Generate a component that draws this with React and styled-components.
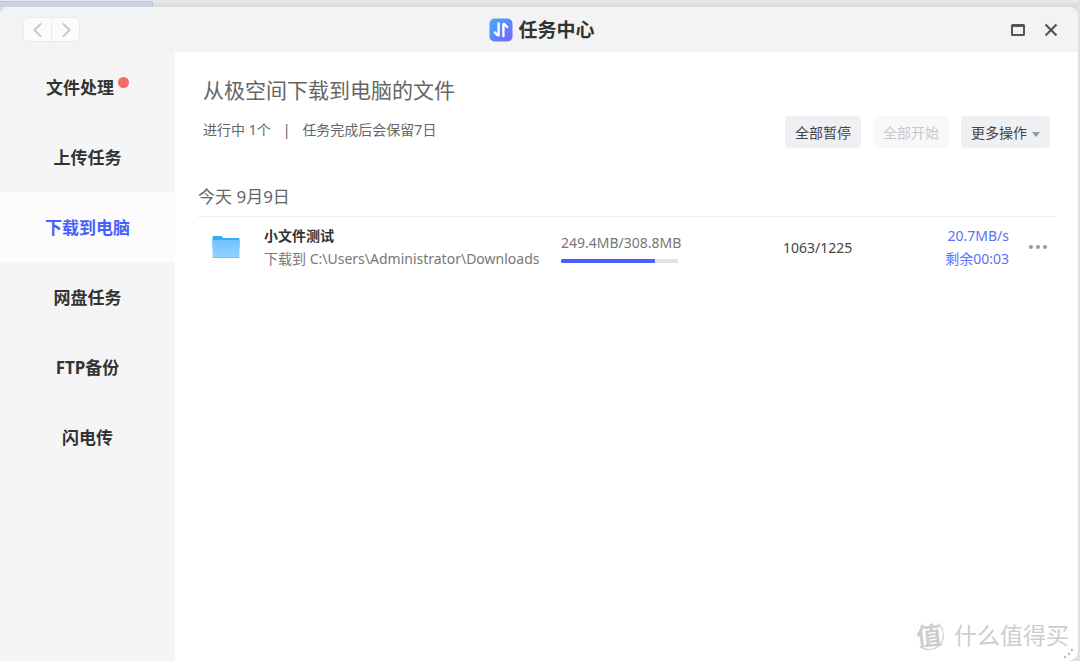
import { useState } from 'react';
import styled, { createGlobalStyle } from 'styled-components';

const GlobalStyle = createGlobalStyle`
  * {
    box-sizing: border-box;
  }

  body {
    margin: 0;
    background-color: #dfe0e4;
    font-family: 'Noto Sans', 'Noto Sans CJK SC', sans-serif;
    color: #333;
  }

  button {
    font-family: inherit;
    border: none;
    padding: 0;
    background: none;
    cursor: pointer;
  }
`;

const Desktop = styled.div`
  display: flex;
  flex-direction: column;
  min-height: 100vh;
  padding-right: 2px;
`;

const Backdrop = styled.div`
  display: flex;
  height: 7px;
  background: linear-gradient(#e8eaec, #d7d8da);
`;

const BackdropTab = styled.div`
  width: 153px;
  margin-top: 1px;
  border: 1px solid #bcc3e8;
  border-bottom: none;
  border-left: none;
  border-radius: 0 2px 0 0;
  background-color: #cdd1e6;
`;

const Window = styled.div`
  position: relative;
  flex: 1;
  display: flex;
  flex-direction: column;
  border-radius: 9px 9px 10px 0;
  overflow: hidden;
  background-color: #fff;
`;

const TitleBar = styled.header`
  display: grid;
  grid-template-columns: 1fr auto 1fr;
  align-items: center;
  height: 45px;
  padding: 0 17px 0 23px;
  background-color: #f3f3f3;
`;

const NavGroup = styled.div`
  display: flex;
  justify-self: start;
  height: 25px;
  border: 1px solid #ececec;
  border-radius: 5px;
  background-color: #fbfbfb;
`;

const NavButton = styled.button`
  display: flex;
  align-items: center;
  justify-content: center;
  width: 27px;
  color: #c8c8c8;

  & + & {
    width: 28px;
    border-left: 1px solid #ececec;
  }
`;

const Title = styled.h1`
  display: flex;
  align-items: center;
  gap: 5px;
  margin: 0;
  font-size: 19px;
  line-height: 28px;
  font-weight: 700;
`;

const WindowControls = styled.div`
  display: flex;
  justify-self: end;
  gap: 13px;
`;

const ControlButton = styled.button`
  display: flex;
  align-items: center;
  justify-content: center;
  width: 20px;
  height: 20px;
  color: #555;
`;

const Body = styled.div`
  flex: 1;
  display: flex;
`;

const Sidebar = styled.nav`
  flex: none;
  width: 175px;
  background-color: #f5f5f5;
`;

const SidebarItem = styled.button`
  display: flex;
  align-items: center;
  justify-content: center;
  gap: 4px;
  width: 100%;
  height: 70px;
  padding-top: 2px;
  font-size: 17px;
  line-height: 24px;
  font-weight: 700;
  color: ${({ $active }) => ($active ? '#4560ff' : '#333')};
  background-color: ${({ $active }) => ($active ? '#fcfcfc' : 'transparent')};
`;

const Badge = styled.span`
  width: 11px;
  height: 11px;
  margin-bottom: 12px;
  border-radius: 50%;
  background-color: #f56c6c;
`;

const Content = styled.main`
  flex: 1;
  min-width: 0;
  padding: 22px 22px 0 23px;
`;

const PageHead = styled.div`
  display: flex;
  align-items: flex-end;
  justify-content: space-between;
  padding: 0 6px 0 5px;
`;

const PageTitle = styled.h2`
  margin: 0 0 12px;
  font-size: 21px;
  line-height: 32px;
  font-weight: 400;
  color: #666;
`;

const Summary = styled.p`
  display: flex;
  gap: 12px;
  margin: 0 0 6px;
  font-size: 14px;
  line-height: 24px;
  color: #666;
`;

const Actions = styled.div`
  display: flex;
  gap: 12px;
`;

const ActionButton = styled.button`
  display: flex;
  align-items: center;
  gap: 5px;
  height: 32px;
  padding: 0 10px;
  border-radius: 5px;
  font-size: 14px;
  color: #444;
  background-color: #eff0f4;

  &:disabled {
    color: #c8c8c8;
    background-color: #f8f8fa;
    cursor: default;
  }
`;

const Caret = styled.span`
  margin-top: 4px;
  border: 4px solid transparent;
  border-top: 5px solid #999;
  border-bottom: none;
`;

const DateHeading = styled.h3`
  margin: 35px 0 0;
  padding-bottom: 6px;
  border-bottom: 1px solid #ebeeee;
  font-size: 17px;
  line-height: 27px;
  font-weight: 400;
  color: #666;
`;

const TaskList = styled.ul`
  margin: 0;
  padding: 0;
  list-style: none;
`;

const TaskRow = styled.li`
  display: grid;
  grid-template-columns: 28px 281px 190px 1fr auto 39px;
  align-items: center;
  padding: 7px 8px 7px 14px;
  font-size: 14px;
  line-height: 23px;
  white-space: nowrap;
`;

const FileInfo = styled.div`
  margin-left: 24px;
`;

const FileName = styled.div`
  font-weight: 700;
`;

const FilePath = styled.div`
  color: #777;
`;

const ProgressCell = styled.div`
  margin-left: 40px;
  color: #777;
`;

const ProgressTrack = styled.div`
  width: 117px;
  height: 4px;
  margin-top: 5px;
  border-radius: 1px;
  overflow: hidden;
  background-color: #e3e3e3;
`;

const ProgressFill = styled.div`
  height: 100%;
  border-radius: 1px;
  background-color: #4560ff;
`;

const Count = styled.div`
  margin-left: 72px;
  color: #444;
`;

const Speed = styled.div`
  text-align: right;
  color: #5b72f8;
`;

const MoreButton = styled.button`
  display: flex;
  justify-content: flex-end;
  color: #999;
`;

const Watermark = styled.div`
  position: absolute;
  right: 9px;
  bottom: 9px;
  display: flex;
  align-items: center;
  gap: 10px;
  font-size: 23px;
  line-height: 34px;
  color: #cdcdcd;
`;

const Seal = styled.span`
  display: flex;
  align-items: center;
  justify-content: center;
  width: 30px;
  height: 30px;
  border: 1px solid #f8f8f8;
  border-right-color: #c9c9c9;
  border-bottom-color: #c9c9c9;
  border-radius: 50%;
  font-size: 25px;
  font-weight: 700;
  transform: rotate(-6deg);
`;

const ResizeGrip = styled.svg`
  position: absolute;
  right: 3px;
  bottom: 1px;
`;

const menu = [
  { label: '文件处理', badge: true },
  { label: '上传任务' },
  { label: '下载到电脑' },
  { label: '网盘任务' },
  { label: 'FTP备份' },
  { label: '闪电传' },
];

const tasks = [
  {
    name: '小文件测试',
    path: '下载到 C:\\Users\\Administrator\\Downloads',
    done: 249.4,
    total: 308.8,
    count: '1063/1225',
    speed: '20.7MB/s',
    remaining: '剩余00:03',
  },
];

function Chevron({ d }) {
  return (
    <svg width="12" height="16" viewBox="0 0 12 16" fill="none" stroke="currentColor" strokeWidth="2">
      <path d={d} />
    </svg>
  );
}

function TransferLogo() {
  return (
    <svg width="24" height="24" viewBox="0 0 24 24">
      <defs>
        <linearGradient id="logo" x1="0" y1="0" x2="1" y2="1">
          <stop offset="0" stopColor="#45b0ff" />
          <stop offset="0.5" stopColor="#5b86ff" />
          <stop offset="1" stopColor="#7a68f5" />
        </linearGradient>
      </defs>
      <rect x="0.5" y="0.5" width="23" height="23" rx="5" fill="url(#logo)" />
      <path
        d="M9.6 5.5V17.2H8.6L5.8 14.4M14.4 18V6.2H15.4L18.2 9"
        fill="none"
        stroke="#fff"
        strokeWidth="2.4"
        strokeLinecap="round"
        strokeLinejoin="round"
      />
    </svg>
  );
}

function FolderIcon() {
  return (
    <svg width="28" height="24" viewBox="0 0 28 24">
      <defs>
        <linearGradient id="folder" x1="0" y1="0" x2="0" y2="1">
          <stop offset="0" stopColor="#6fc3fd" />
          <stop offset="1" stopColor="#92d3ff" />
        </linearGradient>
      </defs>
      <path d="M0.5 2a1 1 0 0 1 1-1H9.5l2 2H26.5a1 1 0 0 1 1 1V12H0.5Z" fill="#37aafa" />
      <path d="M0.5 5H27.5V22a1 1 0 0 1-1 1h-25a1 1 0 0 1-1-1Z" fill="url(#folder)" />
      <path d="M1 22.5H27" stroke="#68bdf5" />
    </svg>
  );
}

function Task({ task }) {
  const percent = (task.done / task.total) * 100;

  return (
    <TaskRow>
      <FolderIcon />
      <FileInfo>
        <FileName>{task.name}</FileName>
        <FilePath>{task.path}</FilePath>
      </FileInfo>
      <ProgressCell>
        {task.done}MB/{task.total}MB
        <ProgressTrack role="progressbar" aria-label={task.name} aria-valuenow={Math.round(percent)}>
          <ProgressFill style={{ width: `${percent}%` }} />
        </ProgressTrack>
      </ProgressCell>
      <Count>{task.count}</Count>
      <Speed>
        <div>{task.speed}</div>
        <div>{task.remaining}</div>
      </Speed>
      <MoreButton aria-label="更多">
        <svg width="20" height="6" viewBox="0 0 20 6" fill="currentColor">
          <circle cx="3" cy="3" r="2" />
          <circle cx="10" cy="3" r="2" />
          <circle cx="17" cy="3" r="2" />
        </svg>
      </MoreButton>
    </TaskRow>
  );
}

function App() {
  const [active, setActive] = useState('下载到电脑');

  return (
    <Desktop>
      <GlobalStyle />
      <Backdrop>
        <BackdropTab />
      </Backdrop>
      <Window>
        <TitleBar>
          <NavGroup>
            <NavButton aria-label="后退">
              <Chevron d="M9 1.5 2.5 8 9 14.5" />
            </NavButton>
            <NavButton aria-label="前进">
              <Chevron d="M3 1.5 9.5 8 3 14.5" />
            </NavButton>
          </NavGroup>
          <Title>
            <TransferLogo />
            任务中心
          </Title>
          <WindowControls>
            <ControlButton aria-label="最大化">
              <svg width="16" height="14" viewBox="0 0 16 14" fill="none" stroke="currentColor">
                <rect x="2" y="2" width="12" height="10" rx="0.5" strokeWidth="2" />
                <path d="M1 3.5H15" />
              </svg>
            </ControlButton>
            <ControlButton aria-label="关闭">
              <svg width="14" height="14" viewBox="0 0 14 14" stroke="currentColor" strokeWidth="2.2">
                <path d="M1.5 1.5 12.5 12.5M12.5 1.5 1.5 12.5" />
              </svg>
            </ControlButton>
          </WindowControls>
        </TitleBar>
        <Body>
          <Sidebar>
            {menu.map(({ label, badge }) => (
              <SidebarItem key={label} $active={label === active} onClick={() => setActive(label)}>
                {label}
                {badge && <Badge />}
              </SidebarItem>
            ))}
          </Sidebar>
          <Content>
            <PageHead>
              <div>
                <PageTitle>从极空间下载到电脑的文件</PageTitle>
                <Summary>
                  <span>进行中 1个</span>
                  <span>|</span>
                  <span>任务完成后会保留7日</span>
                </Summary>
              </div>
              <Actions>
                <ActionButton>全部暂停</ActionButton>
                <ActionButton disabled>全部开始</ActionButton>
                <ActionButton>
                  更多操作
                  <Caret />
                </ActionButton>
              </Actions>
            </PageHead>
            <DateHeading>今天 9月9日</DateHeading>
            <TaskList>
              {tasks.map((task) => (
                <Task key={task.name} task={task} />
              ))}
            </TaskList>
          </Content>
        </Body>
        <Watermark>
          <Seal>值</Seal>
          什么值得买
        </Watermark>
        <ResizeGrip width="12" height="12" viewBox="0 0 12 12" fill="#aab8f5">
          <circle cx="9" cy="2" r="1.2" />
          <circle cx="6" cy="6" r="1.2" />
          <circle cx="2" cy="9" r="1.2" />
        </ResizeGrip>
      </Window>
    </Desktop>
  );
}

export default App;
